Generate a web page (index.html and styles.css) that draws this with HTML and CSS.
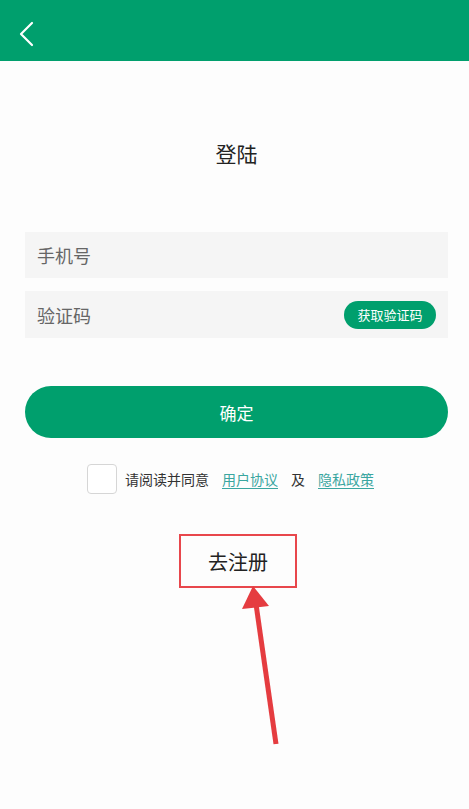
FILE: index.html
```html
<!DOCTYPE html>
<html lang="zh-CN">
<head>
    <meta charset="UTF-8">
    <meta name="viewport" content="width=device-width, initial-scale=1.0">
    <title>登陆</title>
    <link rel="stylesheet" href="styles.css">
</head>
<body>
    <header class="topbar">
        <button class="back" aria-label="返回">
            <svg width="16" height="26" viewBox="0 0 16 26">
                <polyline points="13,2 2,13 13,24" fill="none" stroke="#fff" stroke-width="2.2" stroke-linecap="round" stroke-linejoin="round"/>
            </svg>
        </button>
    </header>

    <main class="page">
        <h1 class="title">登陆</h1>

        <div class="field">
            <input type="text" placeholder="手机号">
        </div>
        <div class="field">
            <input type="text" placeholder="验证码">
            <button class="code-btn">获取验证码</button>
        </div>

        <button class="submit">确定</button>

        <div class="agree">
            <span class="check"></span>
            <span class="agree-text">请阅读并同意</span>
            <a href="#" class="link">用户协议</a>
            <span class="agree-text">及</span>
            <a href="#" class="link">隐私政策</a>
        </div>

        <div class="register-wrap">
            <a href="#" class="register">去注册</a>
        </div>
    </main>

    <!-- annotation arrow drawn over the page -->
    <svg class="arrow" width="469" height="809" viewBox="0 0 469 809">
        <line x1="276" y1="744" x2="256" y2="604" stroke="#e53c40" stroke-width="5"/>
        <polygon points="253,586 242,609 269,606" fill="#e53c40"/>
    </svg>
</body>
</html>
```

FILE: styles.css
```css
:root {
    --green: #009f6d;
    --field: #f5f5f5;
    --link: #3aa6a0;
    --red: #e8474c;
}

* {
    margin: 0;
    padding: 0;
    box-sizing: border-box;
    font-family: "Noto Sans CJK SC", "Noto Sans", sans-serif;
}

body {
    background: #fdfdfd;
    min-height: 100vh;
    position: relative;
}

.topbar {
    height: 61px;
    background-color: var(--green);
    display: flex;
    align-items: center;
    padding-left: 19px;
}

.back {
    border: none;
    background: none;
    display: flex;
    margin-top: 6px;
}

.page {
    padding: 0 21px 0 25px;
    display: flex;
    flex-direction: column;
}

.title {
    margin-top: 77px;
    text-align: center;
    font-size: 21px;
    font-weight: 400;
    line-height: 30px;
    color: #222;
}

.field {
    margin-top: 13px;
    height: 47px;
    background-color: var(--field);
    display: flex;
    align-items: center;
    padding: 0 12px 0 12px;
}

.title + .field {
    margin-top: 64px;
    height: 46px;
}

.field input {
    flex: 1;
    border: none;
    background: none;
    outline: none;
    font-size: 18px;
    color: #333;
}

.field input::placeholder {
    color: #666;
}

.code-btn {
    border: none;
    background-color: var(--green);
    color: #fff;
    font-size: 13px;
    width: 92px;
    height: 28px;
    border-radius: 14px;
}

.submit {
    margin-top: 48px;
    height: 52px;
    border: none;
    border-radius: 26px;
    background-color: var(--green);
    color: #fff;
    font-size: 17px;
}

.agree {
    margin-top: 26px;
    display: flex;
    align-items: center;
    justify-content: center;
    gap: 13px;
    padding-right: 12px;
    font-size: 14px;
}

.check {
    width: 30px;
    height: 30px;
    border: 1px solid #d6d6d6;
    border-radius: 4px;
    background: #fff;
    margin-right: -5px;
}

.agree-text {
    color: #333;
}

.link {
    color: var(--link);
    text-decoration: underline;
    text-underline-offset: 3px;
}

.register-wrap {
    margin-top: 40px;
    display: flex;
    justify-content: center;
    padding-left: 3px;
}

.register {
    width: 118px;
    height: 54px;
    border: 2px solid var(--red);
    display: flex;
    align-items: center;
    justify-content: center;
    font-size: 20px;
    color: #222;
    text-decoration: none;
}

.arrow {
    position: absolute;
    left: 0;
    top: 0;
    pointer-events: none;
}
```
